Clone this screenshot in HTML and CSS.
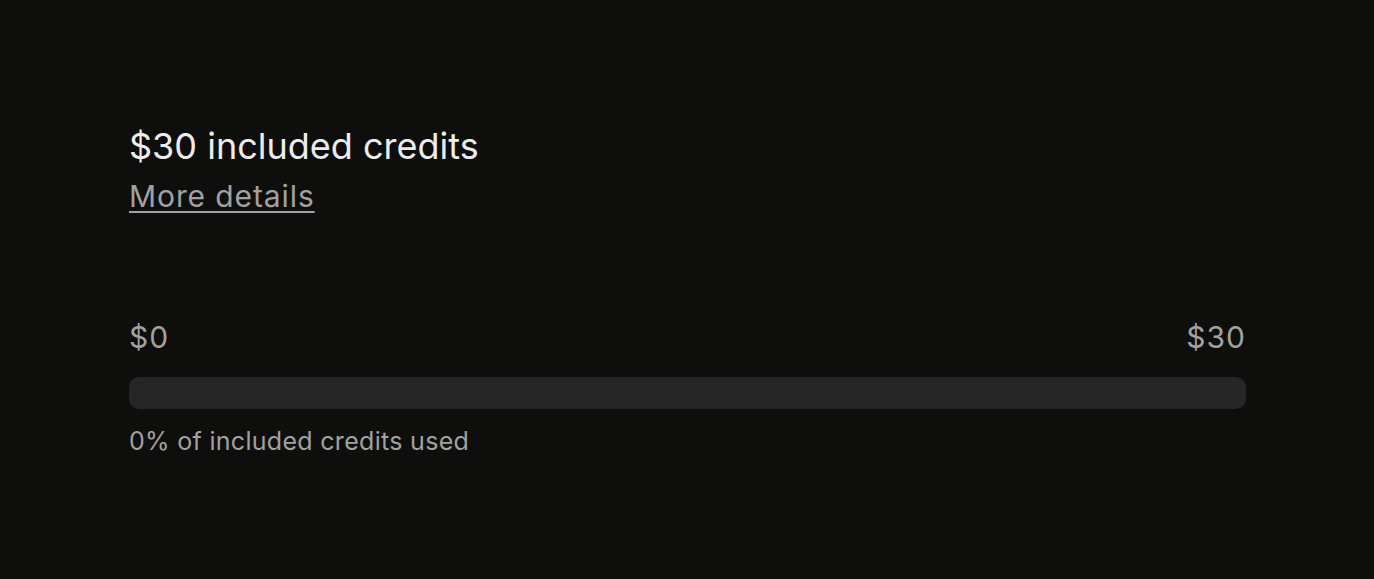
FILE: index.html
```html
<!DOCTYPE html>
<html lang="en">
<head>
  <meta charset="UTF-8" />
  <title>Credits</title>
  <link rel="stylesheet" href="styles.css">
</head>
<body>
  <div class="credits">
    <div class="credits-head">
      <div class="credits-title">$30 included credits</div>
      <a href="#" class="credits-link">More details</a>
    </div>

    <div class="usage">
      <div class="usage-range">
        <span>$0</span>
        <span>$30</span>
      </div>
      <div class="usage-bar"><div class="usage-fill" style="width:0%"></div></div>
      <div class="usage-note">0% of included credits used</div>
    </div>
  </div>
</body>
</html>
```

FILE: styles.css
```css
*{margin:0;padding:0;box-sizing:border-box;}
html,body{width:100%;height:100%;background:#0e0f0d;font-family:Inter,"Noto Sans",sans-serif;overflow:hidden;}

.credits{padding:124px 128px 0 129px;}

.credits-head{display:flex;flex-direction:column;align-items:flex-start;}

.credits-title{font-size:36px;line-height:44px;color:#ececec;}

.credits-link{margin-top:8px;font-size:30px;line-height:40px;letter-spacing:0.9px;color:#a1a1a1;
  text-decoration:underline;text-underline-offset:4px;text-decoration-thickness:2px;}

.usage{margin-top:101px;}

.usage-range{display:flex;justify-content:space-between;
  font-size:30px;line-height:40px;letter-spacing:1px;color:#a1a1a1;}

.usage-bar{margin-top:20px;height:32px;border-radius:10px;background:#262626;overflow:hidden;}
.usage-fill{height:100%;background:#ededed;}

.usage-note{margin-top:16px;font-size:25px;line-height:32px;letter-spacing:0.3px;color:#a1a1a1;}
```
